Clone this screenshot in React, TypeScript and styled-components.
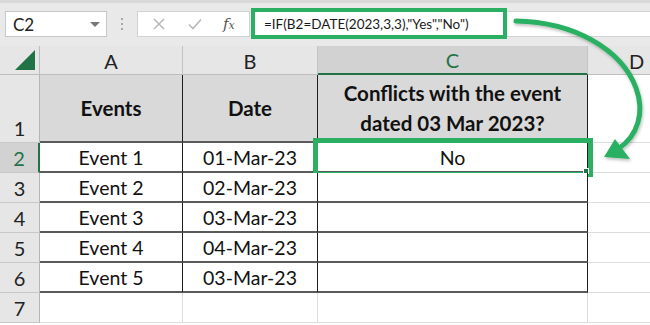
import styled, { createGlobalStyle } from "styled-components";

const GREEN = "#2bb063";
const XL_GREEN = "#217346";

const Global = createGlobalStyle`
  body {
    margin: 0;
    background: #ffffff;
    font-family: Lato, "Liberation Sans", sans-serif;
    overflow: hidden;
  }
`;

const Page = styled.div`
  position: relative;
  width: 650px;
  height: 325px;
  overflow: hidden;
  background: #ffffff;
`;

const FormulaBar = styled.div`
  height: 46px;
  box-sizing: border-box;
  background: #e9e9e9;
  border-top: 3px solid #d8d8d8;
  padding-top: 8px;
  display: flex;
  align-items: flex-start;
`;

const NameBox = styled.div`
  margin-left: 5px;
  width: 102px;
  height: 26px;
  box-sizing: border-box;
  background: #fff;
  border: 1px solid #c8c8c8;
  display: flex;
  align-items: center;
  justify-content: space-between;
  padding: 0 6px 0 7px;
  font-size: 17px;
  color: #222;
`;

const DropArrow = styled.span`
  width: 0;
  height: 0;
  border-left: 5px solid transparent;
  border-right: 5px solid transparent;
  border-top: 5px solid #777;
`;

const Dots = styled.div`
  width: 30px;
  height: 26px;
  display: flex;
  flex-direction: column;
  align-items: center;
  justify-content: center;
  gap: 3px;
  & > span {
    width: 2px;
    height: 2px;
    background: #aaa;
  }
`;

const FuncBox = styled.div`
  width: 113px;
  height: 26px;
  box-sizing: border-box;
  background: #fff;
  border: 1px solid #d2d2d2;
  display: flex;
  align-items: center;
  justify-content: space-around;
  padding: 0 4px;
`;

const Fx = styled.span`
  font-family: "DejaVu Serif", "Liberation Serif", serif;
  font-style: italic;
  font-size: 15px;
  color: #555;
  & > small {
    font-size: 11px;
  }
`;

const FormulaInput = styled.div`
  flex: 1;
  height: 26px;
  margin-left: 1px;
  background: #fff;
  border-top: 1px solid #d2d2d2;
  border-bottom: 1px solid #d2d2d2;
  box-sizing: border-box;
`;

const FormulaHighlight = styled.div`
  width: 256px;
  height: 31px;
  margin-top: -4px;
  box-sizing: border-box;
  border: 4px solid ${GREEN};
  display: flex;
  align-items: center;
  padding-left: 9px;
  font-size: 13.5px;
  color: #1a1a1a;
  white-space: nowrap;
`;

const Sheet = styled.div`
  display: grid;
  grid-template-columns: 40px 143px 135px 270px 98px;
  grid-template-rows: 29px 68px repeat(6, 30px);
`;

const Corner = styled.div`
  background: #e6e6e6;
  border-right: 1px solid #bdbdbd;
  border-bottom: 1px solid #bdbdbd;
  display: flex;
  align-items: flex-end;
  justify-content: flex-end;
  padding: 0 4px 4px 0;
`;

const Triangle = styled.span`
  width: 0;
  height: 0;
  border-left: 20px solid transparent;
  border-bottom: 20px solid ${XL_GREEN};
`;

const ColHead = styled.div<{ $active?: boolean }>`
  box-sizing: border-box;
  background: ${(p) => (p.$active ? "#d2d2d2" : "#e6e6e6")};
  border-right: 1px solid #c4c4c4;
  border-bottom: ${(p) => (p.$active ? `2px solid ${XL_GREEN}` : "1px solid #bdbdbd")};
  display: flex;
  align-items: center;
  justify-content: center;
  font-size: 20px;
  color: ${(p) => (p.$active ? XL_GREEN : "#222")};
  padding-top: 1px;
`;

const RowHead = styled.div<{ $active?: boolean }>`
  box-sizing: border-box;
  background: ${(p) => (p.$active ? "#d2d2d2" : "#e6e6e6")};
  border-right: ${(p) => (p.$active ? `2px solid ${XL_GREEN}` : "1px solid #b5b5b5")};
  border-bottom: 1px solid #c8c8c8;
  display: flex;
  align-items: flex-end;
  justify-content: center;
  padding-bottom: 2px;
  font-size: 20px;
  color: ${(p) => (p.$active ? XL_GREEN : "#222")};
`;

const TableCell = styled.div<{ $head?: boolean }>`
  position: relative;
  box-sizing: border-box;
  background: ${(p) => (p.$head ? "#d9d9d9" : "#ffffff")};
  border-right: 1px solid #1e1e1e;
  border-bottom: 2px solid #5a5a5a;
  display: flex;
  align-items: center;
  justify-content: center;
  text-align: center;
  font-size: ${(p) => (p.$head ? "20.5px" : "19.5px")};
  font-weight: ${(p) => (p.$head ? 700 : 400)};
  line-height: 30px;
  color: #111;
  padding-top: ${(p) => (p.$head ? "0" : "2px")};
`;

const EmptyCell = styled.div<{ $last?: boolean }>`
  box-sizing: border-box;
  border-right: ${(p) => (p.$last ? "none" : "1px solid #dcdcdc")};
  border-bottom: 1px solid #dcdcdc;
`;

const Selection = styled.div`
  position: absolute;
  left: -5px;
  top: -5px;
  right: -6px;
  bottom: -6px;
  border: 5px solid ${GREEN};
  pointer-events: none;
`;

const FillHandle = styled.span`
  position: absolute;
  right: -2px;
  bottom: -3px;
  width: 4px;
  height: 4px;
  background: ${XL_GREEN};
  border: 1px solid #fff;
`;

const ArrowLayer = styled.svg`
  position: absolute;
  left: 0;
  top: 0;
  pointer-events: none;
`;

const rows = [
  ["Event 1", "01-Mar-23"],
  ["Event 2", "02-Mar-23"],
  ["Event 3", "03-Mar-23"],
  ["Event 4", "04-Mar-23"],
  ["Event 5", "03-Mar-23"],
];

export default function App() {
  return (
    <Page>
      <Global />
      <FormulaBar>
        <NameBox>
          <span>C2</span>
          <DropArrow />
        </NameBox>
        <Dots>
          <span />
          <span />
          <span />
        </Dots>
        <FuncBox>
          <svg width="14" height="14" viewBox="0 0 14 14">
            <path d="M2 2 L12 12 M12 2 L2 12" stroke="#b8b8b8" strokeWidth="1.5" />
          </svg>
          <svg width="16" height="14" viewBox="0 0 16 14">
            <path d="M2 7.5 L6 11.5 L14 2.5" stroke="#b8b8b8" strokeWidth="1.6" fill="none" />
          </svg>
          <Fx>
            f<small>x</small>
          </Fx>
        </FuncBox>
        <FormulaInput>
          <FormulaHighlight>=IF(B2=DATE(2023,3,3),"Yes","No")</FormulaHighlight>
        </FormulaInput>
      </FormulaBar>

      <Sheet>
        <Corner>
          <Triangle />
        </Corner>
        <ColHead>A</ColHead>
        <ColHead>B</ColHead>
        <ColHead $active>C</ColHead>
        <ColHead>D</ColHead>

        <RowHead>1</RowHead>
        <TableCell $head>Events</TableCell>
        <TableCell $head>Date</TableCell>
        <TableCell $head>
          Conflicts with the event
          <br />
          dated 03 Mar 2023?
        </TableCell>
        <EmptyCell $last />

        {rows.map(([ev, date], i) => (
          <>
            <RowHead key={`h${i}`} $active={i === 0}>
              {i + 2}
            </RowHead>
            <TableCell key={`a${i}`}>{ev}</TableCell>
            <TableCell key={`b${i}`}>{date}</TableCell>
            <TableCell key={`c${i}`}>
              {i === 0 && (
                <>
                  No
                  <Selection />
                  <FillHandle />
                </>
              )}
            </TableCell>
            <EmptyCell key={`d${i}`} $last />
          </>
        ))}

        <RowHead>7</RowHead>
        <EmptyCell />
        <EmptyCell />
        <EmptyCell />
        <EmptyCell $last />
      </Sheet>

      <ArrowLayer width="650" height="325" viewBox="0 0 650 325">
        <defs>
          <filter id="sh" x="-20%" y="-20%" width="140%" height="140%">
            <feDropShadow dx="1" dy="2" stdDeviation="1.5" floodColor="#000" floodOpacity="0.25" />
          </filter>
        </defs>
        <g filter="url(#sh)">
          <path
            d="M516 21 C575 22 622 50 636 88 C645 112 638 136 618 149"
            stroke={GREEN}
            strokeWidth="5"
            fill="none"
            strokeLinecap="round"
          />
          <polygon points="604,157 615,139 630,159" fill={GREEN} />
        </g>
      </ArrowLayer>
    </Page>
  );
}
